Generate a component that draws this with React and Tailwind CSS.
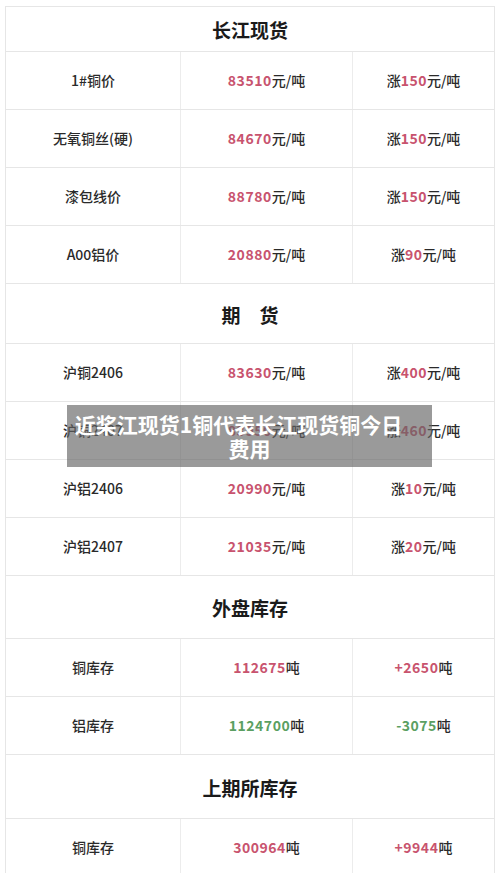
import React from 'react';

// ─── Data ─────────────────────────────────────────────────────────────────────

const RED = 'text-[#c8536e]';
const GREEN = 'text-[#5b9f62]';

const sections = [
  {
    title: '长江现货',
    h: 'h-[45px]',
    rows: [
      { name: '1#铜价', price: '83510', unit: '元/吨', pre: '涨', change: '150', cunit: '元/吨', tone: RED },
      { name: '无氧铜丝(硬)', price: '84670', unit: '元/吨', pre: '涨', change: '150', cunit: '元/吨', tone: RED },
      { name: '漆包线价', price: '88780', unit: '元/吨', pre: '涨', change: '150', cunit: '元/吨', tone: RED },
      { name: 'A00铝价', price: '20880', unit: '元/吨', pre: '涨', change: '90', cunit: '元/吨', tone: RED },
    ],
  },
  {
    title: '期　货',
    h: 'h-[60px]',
    rows: [
      { name: '沪铜2406', price: '83630', unit: '元/吨', pre: '涨', change: '400', cunit: '元/吨', tone: RED },
      { name: '沪铜2407', price: '83950', unit: '元/吨', pre: '涨', change: '460', cunit: '元/吨', tone: RED },
      { name: '沪铝2406', price: '20990', unit: '元/吨', pre: '涨', change: '10', cunit: '元/吨', tone: RED },
      { name: '沪铝2407', price: '21035', unit: '元/吨', pre: '涨', change: '20', cunit: '元/吨', tone: RED },
    ],
  },
  {
    title: '外盘库存',
    h: 'h-[63px]',
    rows: [
      { name: '铜库存', price: '112675', unit: '吨', pre: '', change: '+2650', cunit: '吨', tone: RED },
      { name: '铝库存', price: '1124700', unit: '吨', pre: '', change: '-3075', cunit: '吨', tone: GREEN },
    ],
  },
  {
    title: '上期所库存',
    h: 'h-[64px]',
    rows: [
      { name: '铜库存', price: '300964', unit: '吨', pre: '', change: '+9944', cunit: '吨', tone: RED },
    ],
  },
];

// ─── Rows ─────────────────────────────────────────────────────────────────────

function SectionHeader({ title, h }) {
  return (
    <div className={`${h} border-b border-[#e6e6e6] flex items-center justify-center pt-[3px]`}>
      <span className="text-[19px] font-bold text-[#1a1a1a]">{title}</span>
    </div>
  );
}

function DataRow({ row }) {
  return (
    <div className="h-[58px] border-b border-[#e6e6e6] grid grid-cols-[175px_172px_1fr] text-[14px] font-medium text-[#2a2a2a]">
      <div className="flex items-center justify-center border-r border-[#ececec]">{row.name}</div>
      <div className="flex items-center justify-center border-r border-[#ececec]">
        <span className={`${row.tone} font-semibold tracking-[0.5px]`}>{row.price}</span>
        {row.unit}
      </div>
      <div className="flex items-center justify-center">
        {row.pre}
        <span className={`${row.tone} font-semibold tracking-[0.5px]`}>{row.change}</span>
        {row.cunit}
      </div>
    </div>
  );
}

// ─── Page ─────────────────────────────────────────────────────────────────────

export default function App() {
  return (
    <main
      className="relative bg-white h-[873px] overflow-hidden pt-[6px] pl-[5px]"
      style={{ fontFamily: '"Noto Sans CJK SC", "Noto Sans", sans-serif' }}
    >
      <div className="w-[490px] border-t border-x border-[#e6e6e6]">
        {sections.map((s) => (
          <section key={s.title}>
            <SectionHeader title={s.title} h={s.h} />
            {s.rows.map((r) => <DataRow key={r.name + r.price} row={r} />)}
          </section>
        ))}
      </div>

      {/* Caption overlay */}
      <div className="absolute left-[67px] top-[405px] w-[365px] h-[62px] bg-[rgba(100,100,100,0.65)] flex flex-col justify-center text-white text-[21px] font-bold leading-[24px] text-center whitespace-nowrap">
        <p className="pr-[22px]">近桨江现货1铜代表长江现货铜今日</p>
        <p>费用</p>
      </div>
    </main>
  );
}
